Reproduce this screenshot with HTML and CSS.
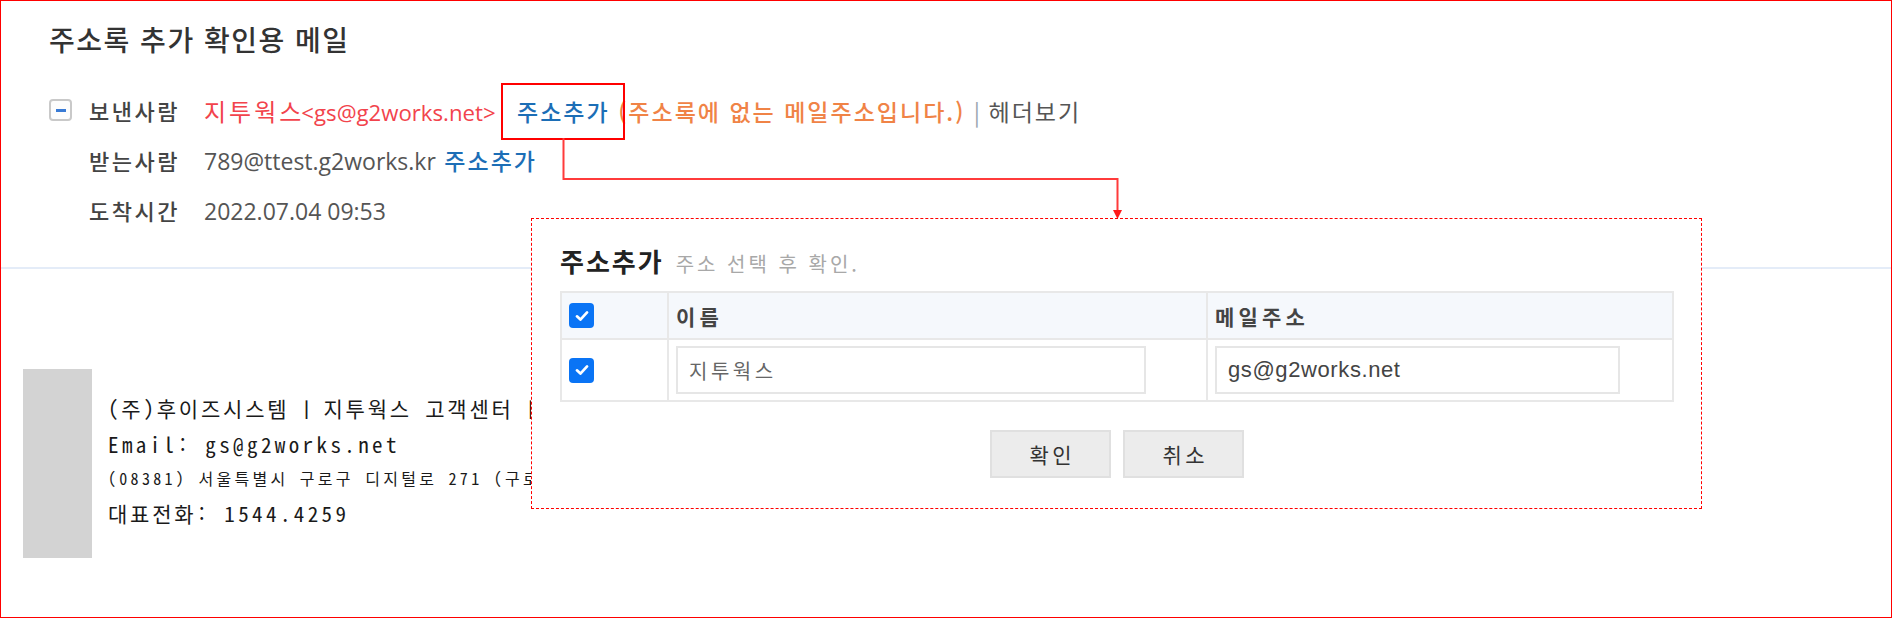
FILE: index.html
```html
<!DOCTYPE html>
<html lang="ko">
<head>
<meta charset="utf-8">
<title>주소록 추가 확인용 메일</title>
<link rel="stylesheet" href="styles.css">
</head>
<body>
<div class="frame">
  <div class="mail-head">
    <h1 class="subject">주소록 추가 확인용 메일</h1>
    <div class="meta">
      <div class="meta-row">
        <span class="toggle"><span class="toggle-bar"></span></span>
        <span class="label">보낸사람</span>
        <span class="value">
          <span class="sender">지투웍스</span><span class="sender-mail">&lt;gs@g2works.net&gt;</span>
          <a class="add-link first">주소추가</a>
          <span class="warn">(주소록에 없는 메일주소입니다.)</span>
          <span class="sep">|</span>
          <span class="header-view">헤더보기</span>
        </span>
      </div>
      <div class="meta-row indent">
        <span class="label">받는사람</span>
        <span class="value"><span class="latin">789@ttest.g2works.kr</span> <a class="add-link">주소추가</a></span>
      </div>
      <div class="meta-row indent">
        <span class="label">도착시간</span>
        <span class="value"><span class="latin">2022.07.04 09:53</span></span>
      </div>
    </div>
  </div>

  <div class="mail-body">
    <div class="signature">
      <div class="sig-logo"></div>
      <div class="sig-text">
        <p class="sig-line">(주)후이즈시스템<span class="bar">ㅣ</span>지투웍스 고객센터<span class="bar">ㅣ</span>평일 09:00 ~ 18:00</p>
        <p class="sig-line"><span class="sig-latin">Email: gs@g2works.net</span></p>
        <p class="sig-line small">(08381) 서울특별시 구로구 디지털로 271 (구로동, 벽산디지털밸리3차)</p>
        <p class="sig-line">대표전화<span class="sig-latin">: 1544.4259</span></p>
      </div>
    </div>
  </div>

  <div class="highlight"></div>
  <svg class="connector" width="1892" height="618" viewBox="0 0 1892 618">
    <path d="M563.5 138 V179 H1117.5 V211" fill="none" stroke="#ff3b3b" stroke-width="2"/>
    <path d="M1113 210 L1122 210 L1117.5 219 Z" fill="#ff1a1a"/>
  </svg>

  <div class="popup">
    <div class="popup-title"><strong>주소추가</strong><span class="hint">주소 선택 후 확인.</span></div>
    <table class="addr-table">
      <colgroup>
        <col class="c-check"><col class="c-name"><col class="c-mail">
      </colgroup>
      <thead>
        <tr>
          <th><span class="cb"><svg viewBox="0 0 16 16" width="16" height="16"><path d="M3.5 8.3 L6.6 11.2 L12.5 4.8" fill="none" stroke="#fff" stroke-width="2.4" stroke-linecap="round" stroke-linejoin="round"/></svg></span></th>
          <th>이름</th>
          <th>메일주소</th>
        </tr>
      </thead>
      <tbody>
        <tr>
          <td><span class="cb"><svg viewBox="0 0 16 16" width="16" height="16"><path d="M3.5 8.3 L6.6 11.2 L12.5 4.8" fill="none" stroke="#fff" stroke-width="2.4" stroke-linecap="round" stroke-linejoin="round"/></svg></span></td>
          <td><div class="field name-field">지투웍스</div></td>
          <td><div class="field mail-field">gs@g2works.net</div></td>
        </tr>
      </tbody>
    </table>
    <div class="actions">
      <button class="btn">확인</button>
      <button class="btn">취소</button>
    </div>
  </div>
</div>
</body>
</html>
```

FILE: styles.css
```css
* { box-sizing: border-box; }

html, body {
  margin: 0;
  padding: 0;
  background: #fff;
}

body {
  font-family: "Noto Sans CJK KR", "Noto Sans", sans-serif;
  color: #333;
}

.frame {
  position: relative;
  width: 1892px;
  height: 618px;
  border: 1px solid #ff0000;
  overflow: hidden;
}

/* ---------- mail header ---------- */
.mail-head {
  height: 268px;
  padding: 16px 0 0 48px;
  border-bottom: 2px solid #e4ecf8;
}

.subject {
  margin: 0;
  font-size: 28px;
  line-height: 44px;
  font-weight: 500;
  color: #333;
  letter-spacing: 1.5px;
}

.meta {
  margin-top: 24px;
  display: flex;
  flex-direction: column;
}

.meta-row {
  display: flex;
  align-items: center;
  height: 50px;
  white-space: nowrap;
}

.meta-row.indent {
  padding-left: 40px;
}

.toggle {
  width: 23px;
  height: 22px;
  margin-right: 17px;
  border: 2px solid #c9c9c9;
  border-radius: 4px;
  display: flex;
  align-items: center;
  justify-content: center;
  background: #fdfdfd;
}

.toggle-bar {
  width: 10px;
  height: 3px;
  background: #3a7bd5;
}

.label {
  width: 115px;
  font-size: 22px;
  font-weight: 500;
  color: #444;
  letter-spacing: 2.5px;
}

.value {
  color: #555;
  font-size: 23px;
  letter-spacing: 2px;
}

.latin,
.sender-mail {
  font-family: "Open Sans", "Noto Sans CJK KR", sans-serif;
  font-size: 23px;
  letter-spacing: 0;
}

.sender-mail {
  font-size: 22.2px;
  color: #f2434c;
}

.sender {
  color: #f2434c;
  font-size: 24px;
  letter-spacing: 3px;
  margin-right: -3px;
}

.add-link {
  color: #1c6eb6;
  font-weight: 500;
}

.add-link.first {
  margin-left: 13px;
}

.warn {
  color: #f08346;
  font-weight: 500;
}

.sep {
  color: #9aa4b0;
  margin: 0;
  letter-spacing: 0;
}

.header-view {
  color: #555;
}

/* ---------- body / signature ---------- */
.mail-body {
  padding: 100px 0 0 22px;
}

.signature {
  display: flex;
  align-items: stretch;
  height: 189px;
}

.sig-logo {
  width: 69px;
  background: #d3d3d3;
}

.sig-text {
  padding: 21px 0 0 16px;
  color: #1a1a1a;
  font-family: "Noto Sans Mono CJK KR", "Noto Sans CJK KR", monospace;
}

.sig-line {
  margin: 0;
  font-size: 21px;
  line-height: 36px;
  letter-spacing: 2.8px;
  white-space: nowrap;
}

.sig-latin {
  letter-spacing: 3.4px;
}

.bar {
  display: inline-block;
  width: 34px;
  text-align: center;
  letter-spacing: 0;
}

.sig-line.small {
  font-size: 16px;
  line-height: 33px;
  letter-spacing: 3.3px;
}

/* ---------- annotation overlay ---------- */
.highlight {
  position: absolute;
  left: 500px;
  top: 82px;
  width: 124px;
  height: 57px;
  border: 2px solid #ff0000;
}

.connector {
  position: absolute;
  left: -1px;
  top: -1px;
  pointer-events: none;
}

/* ---------- popup ---------- */
.popup {
  position: absolute;
  left: 530px;
  top: 217px;
  width: 1171px;
  height: 291px;
  border: 1px dashed #ff0000;
  background: #fff;
  padding: 26px 29px 0 28px;
}

.popup-title {
  height: 46px;
  line-height: 32px;
  white-space: nowrap;
}

.popup-title strong {
  font-size: 26px;
  font-weight: 700;
  color: #222;
  letter-spacing: 2px;
}

.hint {
  margin-left: 12px;
  font-size: 20px;
  color: #a8a8a8;
  letter-spacing: 3px;
}

.addr-table {
  width: 1112px;
  border-collapse: collapse;
  table-layout: fixed;
}

.c-check { width: 107px; }
.c-name { width: 539px; }
.c-mail { width: 466px; }

.addr-table th,
.addr-table td {
  border: 2px solid #e8e8e8;
  text-align: left;
  vertical-align: middle;
}

.addr-table th {
  height: 47px;
  background: #f5f8fc;
  font-size: 21px;
  font-weight: 700;
  color: #444;
  letter-spacing: 4.2px;
  padding: 0 7px;
}

.addr-table td {
  height: 62px;
  padding: 0 7px;
}

.cb {
  display: flex;
  align-items: center;
  justify-content: center;
  width: 25px;
  height: 25px;
  border-radius: 4px;
  background: #0a74f5;
}

.cb svg {
  width: 18px;
  height: 18px;
}

.field {
  height: 48px;
  border: 2px solid #e6e6e6;
  padding: 0 11px;
  display: flex;
  align-items: center;
  font-size: 20px;
  color: #555;
  white-space: nowrap;
}

.name-field {
  width: 470px;
  color: #666;
  letter-spacing: 3.5px;
}

.mail-field {
  width: 405px;
  font-family: "Liberation Sans", Arial, sans-serif;
  font-size: 22px;
  letter-spacing: 0.6px;
  color: #444;
}

.actions {
  display: flex;
  justify-content: center;
  gap: 12px;
  margin-top: 28px;
  padding-left: 2px;
}

.btn {
  width: 121px;
  height: 48px;
  border: 2px solid #e0e0e0;
  background: #ececec;
  font-family: "Noto Sans CJK KR", sans-serif;
  font-size: 21px;
  letter-spacing: 3.5px;
  padding: 0 0 0 3.5px;
  color: #333;
}
```
